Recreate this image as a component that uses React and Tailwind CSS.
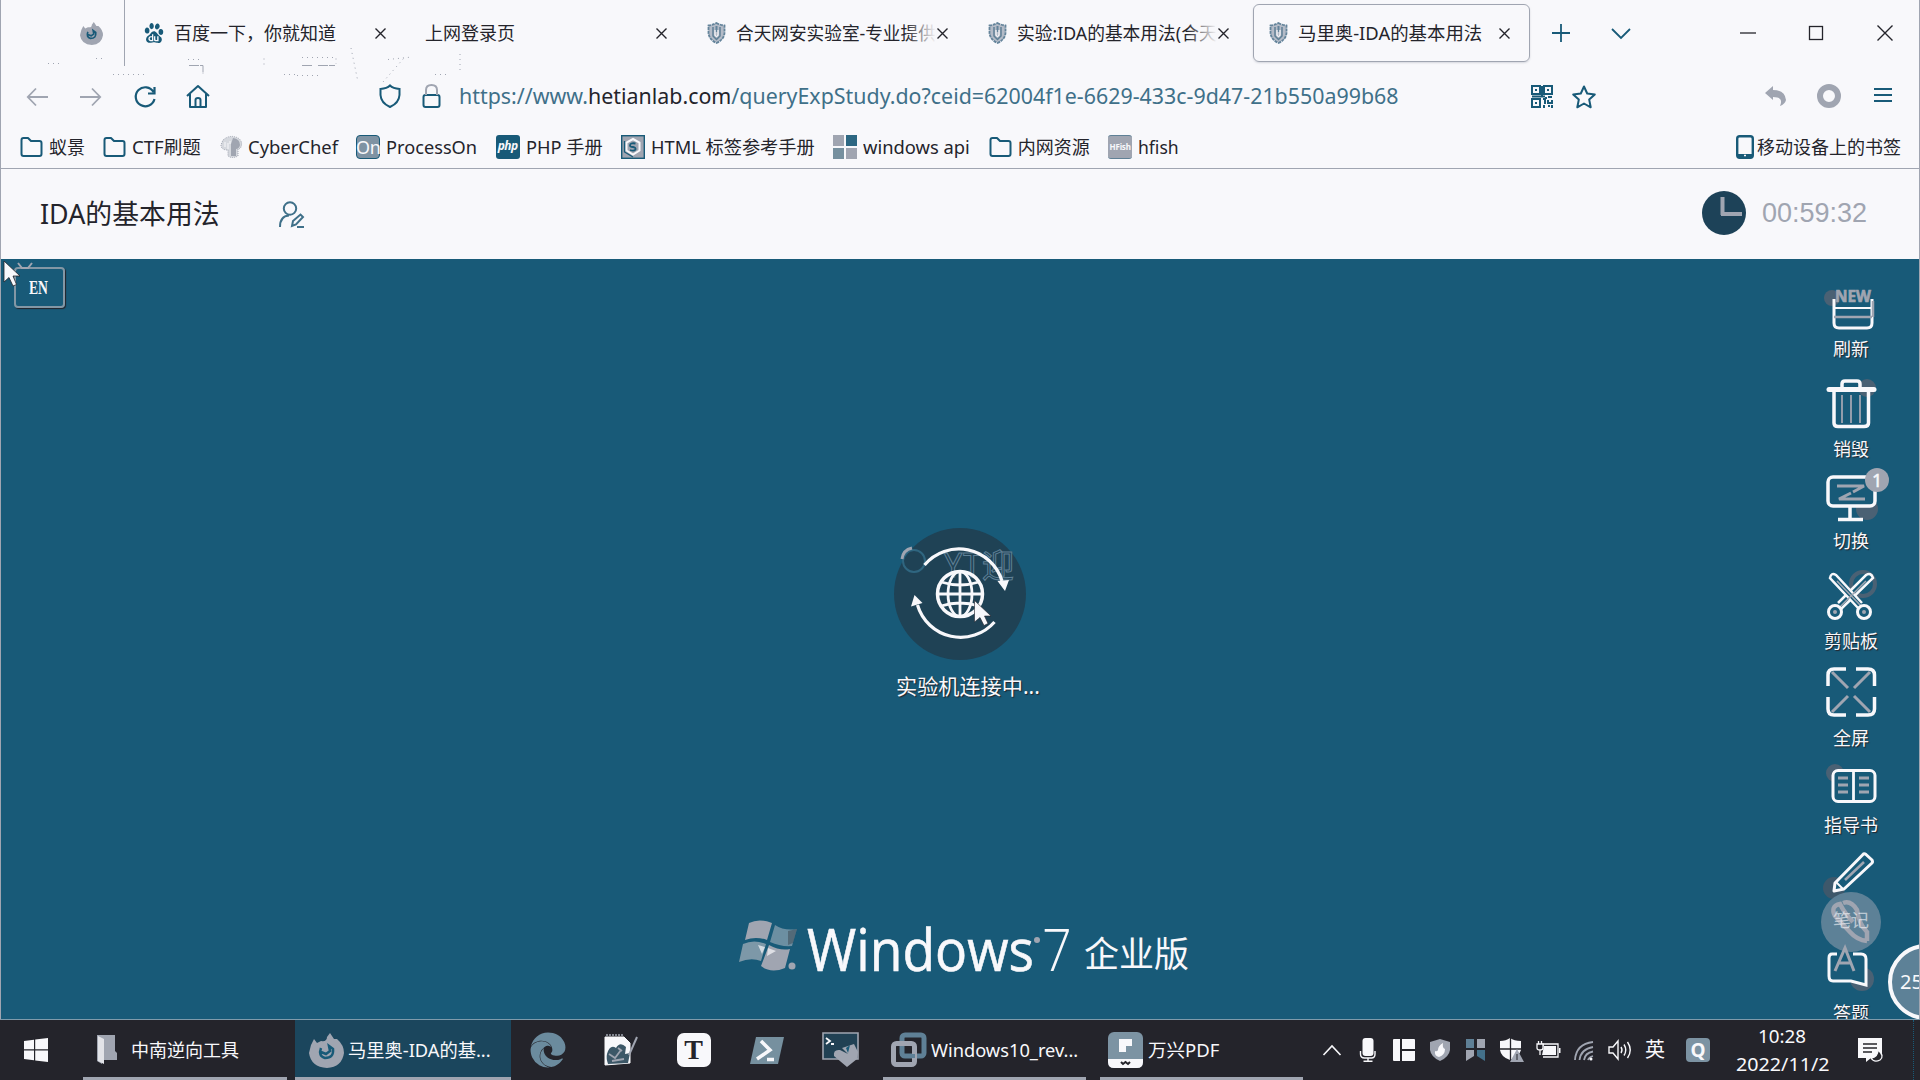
import React, { useLayoutEffect, useRef, useState } from "react";
import { FaEdge } from "react-icons/fa";
import { SiBaidu } from "react-icons/si";

const G = "#a0a5b1";
const T = "#185a78";
const W = "#f8f8fb";
const D = "#24242b";

// Squeezes or stretches one line of text to the width of its box.
function Fit({ className = "", children }) {
  const outer = useRef(null);
  const inner = useRef(null);
  const [s, setS] = useState(1);
  useLayoutEffect(() => {
    setS(outer.current.clientWidth / inner.current.offsetWidth);
  }, []);
  return (
    <span ref={outer} className={"block shrink-0 whitespace-nowrap " + className}>
      <span ref={inner} className="inline-block origin-left" style={{ transform: `scaleX(${s})` }}>
        {children}
      </span>
    </span>
  );
}

function Svg({ w, h, className = "", children, ...p }) {
  return (
    <svg width={w} height={h} viewBox={`0 0 ${w} ${h}`} fill="none" className={"block shrink-0 overflow-visible " + className} {...p}>
      {children}
    </svg>
  );
}

const Cross = ({ size = 12, color = D }) => (
  <Svg w={size} h={size} stroke={color} strokeWidth="1.4">
    <path d={`M.5 .5L${size - 0.5} ${size - 0.5}M${size - 0.5} .5L.5 ${size - 0.5}`} />
  </Svg>
);

const Firefox = ({ w, h }) => (
  <svg width={w} height={h} viewBox="0 0 35 35" preserveAspectRatio="none" fill="none" className="block shrink-0">
    <path d="M2 12L5 6L8 10L12 8Q18 9 18 4L21 0L25 6L28 6Q35 12 35 20Q33 34 18 35Q2 34 0 20Z" fill={G} />
    <path d="M12 15Q9 23 16 25Q25 25 24 16L20 13L21 18L17 21L12 19" stroke={T} strokeWidth="2.500" />
  </svg>
);

const ShieldTab = () => (
  <Svg w={19} h={22}>
    <path d="M9.5 1Q13 3 17.5 3.5V11Q17 17.500 9.500 21Q2 17.500 1.500 11V3.500Q6 3 9.500 1Z" fill="#b4bbc7" stroke="#63839a" strokeWidth="1.800" strokeDasharray="3 .8" />
    <path d="M6 5V14L9.500 17.500L13 14V5" stroke="#5f8096" strokeWidth="1.500" />
    <path d="M9.500 4V10" stroke="#63839a" strokeWidth="2" />
    <path d="M8 8V13Q9.500 16 11 13V8" stroke={W} strokeWidth="1.200" />
  </Svg>
);

function Tab({ icon, title, active, fade, fit }) {
  return (
    <div
      className={
        "flex h-[58px] shrink-0 items-center " +
        (active
          ? "w-[277px] rounded-[6px] border-[1.5px] border-[#a0a5b1] pl-[14px] shadow-[0_1px_2px_#a0a5b166]"
          : "w-[281px] pl-[15px]")
      }
    >
      {icon && <span className="mr-[10px] flex w-5 shrink-0 justify-center">{icon}</span>}
      <div className={"relative whitespace-nowrap " + (icon ? "w-[200px]" : "w-[230px]")}>
        {fit ? <Fit className={fit}>{title}</Fit> : title}
        {fade && <span className="absolute inset-y-0 right-0 w-[30px] bg-gradient-to-r from-[#f8f8fb00] to-[#f8f8fb]" />}
      </div>
      <span className="ml-[1px] shrink-0"><Cross size={11} /></span>
    </div>
  );
}

const Folder = () => (
  <Svg w={23} h={20} stroke={T} strokeWidth="2">
    <path d="M1.500 3Q1.500 1 3.500 1H8L11 4H19.500Q21.500 4 21.500 6V17Q21.500 19 19.500 19H3.500Q1.500 19 1.500 17Z" strokeLinejoin="round" />
  </Svg>
);

const Chef = () => (
  <Svg w={22} h={22}>
    <path d="M3 4Q10-2 18 2Q23 5 21 11Q20 13 18 13V20Q12 23 8 20V14Q1 14 1 9Z" fill="#d5d8de" stroke={G} strokeDasharray="1 1" />
    <path d="M13 2Q20 3 20 9Q19 13 16 13V20H11V8Z" fill={G} />
    <path d="M5 6V11M8 7V13M10 5V8" stroke={W} />
  </Svg>
);

const ProcessOn = () => (
  <span className="flex h-6 w-6 items-center justify-center rounded-[4px] border border-[#185a78] bg-[#7f93a3] text-[18px] leading-none tracking-tight text-[#f8f8fb]">On</span>
);
const Php = () => (
  <span className="flex h-6 w-6 items-center justify-center rounded-[3px] bg-[#185a78] pb-[2px] text-[12px] font-bold italic leading-none tracking-tighter text-[#f8f8fb]">php</span>
);
const HtmlIcon = () => (
  <Svg w={24} h={24}>
    <rect x=".7" y=".7" width="22.600" height="22.600" fill={G} stroke={T} strokeWidth="1.400" />
    <path d="M12 4L18.500 7.500V15.500L12 19.500L5.500 15.500V7.500Z" stroke={W} strokeWidth="2" />
    <path d="M14.500 8.500Q9 7.500 9 10.500Q9 12 12 12Q15 12.500 14.500 14.500Q13 16.500 9 15" stroke={T} strokeWidth="1.800" />
    <path d="M3.500 6V17L12 22" stroke={T} strokeWidth="1.300" />
  </Svg>
);
const WinApi = () => (
  <Svg w={24} h={24}>
    <path d="M0 0H11V11H0ZM13 13H24V24H13Z" fill={G} />
    <path d="M13 0H24V11H13Z" fill="#2d6782" />
    <path d="M0 13H11V24H0Z" fill="#76909f" />
  </Svg>
);
const Hfish = () => (
  <span className="flex h-6 w-6 items-center justify-center rounded-[3px] border-y border-[#5f8096] bg-[#a0a5b1] text-[8px] font-bold leading-none tracking-tight text-[#f8f8fb]">HFish</span>
);

const bookmarks = [
  [<Folder />, "蚁景", "w-[36px]"],
  [<Folder />, "CTF刷题", "w-[69px]"],
  [<Chef />, "CyberChef", "w-[90px]"],
  [<ProcessOn />, "ProcessOn", "w-[91px]"],
  [<Php />, "PHP 手册", "w-[77px]"],
  [<HtmlIcon />, "HTML 标签参考手册", "w-[164px]"],
  [<WinApi />, "windows api", "w-[107px]"],
  [<Folder />, "内网资源", "w-[72px]"],
  [<Hfish />, "hfish", "w-[41px]"],
];

const Cursor = ({ className }) => (
  <Svg w={17} h={26} className={className}>
    <path d="M1 1V22L6 17.500L10 26L13.500 24.500L10 16H17Z" fill={W} stroke={D} strokeWidth=".8" />
  </Svg>
);

const tools = [
  {
    label: "刷新", h: "h-[96px]",
    icon: (
      <>
        <circle cx="11" cy="21" r="8" fill="#4a6174" />
        <path d="M13 22V46Q13 51 18 51H46Q51 51 51 46V22" stroke={W} strokeWidth="3" />
        <path d="M12 31H52" stroke={W} strokeWidth="2" />
        <path d="M13 40H51M52 24V40" stroke={G} strokeWidth="2.500" />
        <text x="14" y="25" fontSize="16" fontWeight="700" fill={G} stroke={G} strokeWidth=".7" textLength="36" lengthAdjust="spacingAndGlyphs">NEW</text>
      </>
    ),
  },
  {
    label: "销毁", h: "h-[100px]",
    icon: (
      <>
        <circle cx="46" cy="11" r="9" fill="#4a6174" />
        <path d="M8 12.500H53" stroke={W} strokeWidth="5" strokeLinecap="round" />
        <path d="M21 11V7Q21 4 24 4H36Q39 4 39 7V11" stroke={W} strokeWidth="3.500" />
        <path d="M13 15V46Q13 49.500 17 49.500H43Q47.500 49.500 47.500 46V15" stroke={W} strokeWidth="3.500" />
        <path d="M21 18V46M30 18V46M39 18V46" stroke={G} strokeWidth="1.800" />
      </>
    ),
  },
  {
    label: "切换", h: "h-[92px]",
    icon: (
      <>
        <circle cx="46" cy="40" r="11" fill="#4a6174" />
        <rect x="7" y="8" width="47" height="29" rx="5" fill={T} stroke={W} strokeWidth="3.500" />
        <path d="M29 37V50M17 50.500H42" stroke={W} strokeWidth="3.500" />
        <path d="M16 17H43L32 23M44 30H18L30 24" stroke={G} strokeWidth="3" />
        <circle cx="56" cy="11" r="12" fill={G} />
        <text x="51" y="17.500" fontSize="18" fill={W} stroke={W} strokeWidth=".5">1</text>
      </>
    ),
  },
  {
    label: "剪贴板", h: "h-[100px]",
    icon: (
      <>
        <circle cx="42" cy="15" r="12" stroke="#4a6174" strokeWidth="4" />
        <path d="M20 40L52 9Q50 3 45 6L17 34" fill={T} stroke={W} strokeWidth="2.500" />
        <path d="M38 40L9 9Q10 3 15 6L41 34" fill={T} stroke={W} strokeWidth="2.500" />
        <path d="M16 12L40 37M45 12L19 38" stroke={G} strokeWidth="1.600" />
        <circle cx="14" cy="43" r="6.500" fill={T} stroke={W} strokeWidth="3" />
        <circle cx="43" cy="43" r="6.500" fill={T} stroke={W} strokeWidth="3" />
        <circle cx="14" cy="43" r="2" fill={G} />
        <circle cx="43" cy="43" r="2" fill={G} />
      </>
    ),
  },
  {
    label: "全屏", h: "h-[97px]",
    icon: (
      <>
        <path d="M7 20V9Q7 3 13 3H25M35 3H47Q53.500 3 53.500 9V20M53.500 31V43Q53.500 49 47 49H35M25 49H13Q7 49 7 43V31" stroke={W} strokeWidth="3.500" />
        <path d="M11 6L27 22M49 6L33 22M11 46L27 30M49 46L33 30" stroke={G} strokeWidth="3" />
      </>
    ),
  },
  {
    label: "指导书", h: "h-[87px]",
    icon: (
      <>
        <circle cx="14" cy="20" r="9" fill="#4a6174" />
        <rect x="12" y="17.500" width="42" height="31" rx="5" fill={T} stroke={W} strokeWidth="3" />
        <path d="M32.500 18V48" stroke={W} strokeWidth="2.800" />
        <path d="M17 25H27M17 32H27M17 39H27M38 25H48M38 32H48M38 39H48" stroke={G} strokeWidth="3" />
      </>
    ),
  },
  {
    label: "笔记", h: "h-[95px]", ghost: true,
    icon: (
      <>
        <circle cx="13" cy="40" r="11" fill="#3e586b" />
        <circle cx="30" cy="74" r="30" fill="#5d8197" />
        <path d="M46 93Q36 92 29 84L14 68Q9 58 19 56Q24 66 32 74M22 55Q30 52 36 62Q38 76 46 84V93" stroke={G} strokeWidth="4.500" />
        <path d="M14 35L42 6.500Q43 5 45 6.500L51 12Q52 14 51 15L23 41L13 43Z" fill={T} stroke={W} strokeWidth="3" strokeLinejoin="round" />
        <path d="M15 34L22 41" stroke={W} strokeWidth="2" />
        <path d="M24 32L43 14" stroke={G} strokeWidth="2.500" />
      </>
    ),
  },
  {
    label: "答题", h: "h-[93px]",
    icon: (
      <>
        <circle cx="41" cy="38" r="12" fill="#4a6174" />
        <path d="M16 13H11Q8 13 8 17V35Q8 40 12 40H30L45 44V18Q45 13 40 13H32" fill={T} stroke={W} strokeWidth="3" />
        <path d="M14 30L24 7L33 30M17 22H30" stroke={G} strokeWidth="3" />
      </>
    ),
  },
];

const Flag = () => (
  <Svg w={60} h={56} className="mt-[3px]">
    <path d="M10 4Q20-1 33 4L28 21Q17 17 6 21Z" fill={G} />
    <path d="M36 6Q45 12 58 10L53 27Q42 28 31 23Z" fill="#6c8fa2" />
    <path d="M4 25Q15 20 27 25L22 42Q12 38 0 43Z" fill="#7d98a8" />
    <path d="M30 26Q41 32 51 30L46 49Q32 55 22 47Z" fill={G} />
    <path d="M19 26L26 28L23 35ZM29 29L37 32L28 37Z" fill={W} opacity=".7" />
    <path d="M49 12L58 10L54 24L49 26Z" fill={D} opacity=".35" />
    <circle cx="53" cy="47" r="3.500" fill={G} />
  </Svg>
);

function Cell({ children, className = "w-9" }) {
  return <div className={"flex h-full shrink-0 items-center justify-center " + className}>{children}</div>;
}

function TrayIcons() {
  return (
    <>
      <Cell><Svg w={18} h={12} stroke={W} strokeWidth="1.600"><path d="M.5 11L9 2L17.500 11" /></Svg></Cell>
      <Cell>
        <Svg w={16} h={24}><rect x="2.500" y="0" width="11" height="18" rx="3" fill={W} /><path d="M.5 13V16Q.5 20 4.500 20H11.500Q15 20 15 16V13M8 20V23M3.500 23.300H12.500" stroke={W} strokeWidth="1.400" /></Svg>
      </Cell>
      <Cell><Svg w={22} h={22}><path d="M0 1Q0 0 1 0H7V22H1Q0 22 0 21ZM9 0H21Q22 0 22 1V10H9ZM9 12H22V21Q22 22 21 22H9Z" fill={W} /></Svg></Cell>
      <Cell><Svg w={20} h={22}><path d="M10 0L20 3V11Q19 18 10 22Q1 18 0 11V3Z" fill={G} /><path d="M13 4Q12 9 15 10Q15 16 9 18Q4 17 5 12Q7 13 8 11Q8 7 13 4Z" fill={W} /></Svg></Cell>
      <Cell><Svg w={20} h={24}><path d="M0 1H8V10H0Z" fill="#5f8096" /><path d="M11 1H19V10H11ZM0 12H8V18L0 23Z" fill={G} /><path d="M11 12H19V23L11 18Z" fill="#43708a" /></Svg></Cell>
      <Cell><Svg w={24} h={24}><path d="M10 0Q14 3 21 3V12Q19 19 10 22Q1 19 0 12V3Q6 3 10 0Z" fill={W} /><path d="M10.500 0V22M0 11H21" stroke={D} strokeWidth="1.300" /><path d="M17 11L24 24H10Z" fill={G} /><path d="M17 16V22" stroke={D} /></Svg></Cell>
      <Cell><Svg w={25} h={20}><path d="M7 6.500V4H22V17H7" stroke={W} strokeWidth="1.300" /><path d="M8 6H20V15H6Z" fill={W} /><path d="M23 8H24.500V13H23Z" fill={W} /><path d="M1 4H7V8Q7 10 4 10Q1 10 1 8ZM2.500 1V4M5.500 1V4M4 10V15" stroke={W} strokeWidth="1.300" fill={D} /></Svg></Cell>
      <Cell><Svg w={20} h={22} stroke={G} strokeWidth="1.800"><path d="M1 21Q2 5 19 3M5.500 21Q7 10 19 8M10 21Q11 14 19 12.500M14 21Q15 18 19 17" /><circle cx="17" cy="20" r="1.500" fill={W} stroke="none" /></Svg></Cell>
      <Cell><Svg w={24} h={22} stroke={W} strokeWidth="1.400"><path d="M1 8H5L10 2V20L5 14H1ZM13 8Q15 11 13 14M16 5.500Q19.500 11 16 16.500M19.500 3Q25 11 19.500 19" /></Svg></Cell>
      <Cell className="w-[34px]"><span className="text-[20px] text-[#f8f8fb]">英</span></Cell>
      <Cell className="ml-[2px] w-12"><span className="flex h-6 w-6 items-center justify-center rounded-[4px] bg-[#7c93a3] pb-[1px] text-[19px] font-bold text-[#f8f8fb]">Q</span></Cell>
    </>
  );
}

function Taskbar() {
  return (
    <div className="flex h-[61px] w-full border-t border-[#7f9bab] bg-[#24242b] text-[18px] text-[#f8f8fb]">
      <Cell className="w-[72px]">
        <Svg w={24} h={24}><path d="M0 3L10 1.700V11.300H0ZM11.200 1.500L24 0V11.300H11.200ZM0 12.500H10V22.300L0 21ZM11.200 12.500H24V24L11.200 22.500Z" fill={W} /></Svg>
      </Cell>
      <div className="ml-[11px] flex w-[204px] items-center border-b-[3px] border-[#a0a5b1] pl-[14px] pt-[3px]">
        <Svg w={20} h={30} className="mr-[14px]"><path d="M0 0H18V16L20 18V25H5V29L0 26Z" fill={G} /><path d="M1 1L7 4V29L1 26Z" fill="#e2e3e8" /></Svg>
        中南逆向工具
      </div>
      <div className="ml-2 flex w-[216px] items-center border-b-[3px] border-[#a0a5b1] bg-[#1b465d] pl-[14px] pt-[3px]">
        <span className="mr-1 flex"><Firefox w={35} h={35} /></span>
        <Fit className="w-[143px]">马里奥-IDA的基...</Fit>
      </div>
      <Cell className="w-[73px]"><FaEdge size={36} color="#6b8b9e" /></Cell>
      <Cell className="w-[73px]">
        <Svg w={34} h={32}><path d="M1 3H20L26 9V29L1 31Z" fill={W} stroke={W} /><path d="M3 2V0M6 2V0M9 2V0M12 2V0M15 2V0M18 2V0" stroke={G} strokeWidth="1.500" /><path d="M3 20Q6 10 12 14Q16 7 22 13L21 20L26 19L24 29L4 30Q2 24 3 20Z" fill="#3c5767" /><path d="M5 20L11 24L17 16M8 27L20 25M14 14L18 17" stroke={G} strokeWidth="1.800" /><path d="M25 21L33 3" stroke={G} strokeWidth="2" /></Svg>
      </Cell>
      <Cell className="w-[73px]"><span className="flex h-[34px] w-[34px] items-center justify-center rounded-[7px] bg-[#f8f8fb] pb-[1px] font-[Liberation_Serif,serif] text-[28px] font-bold leading-none text-[#24242b]">T</span></Cell>
      <Cell className="w-[73px]">
        <Svg w={34} h={27}><path d="M6 0H34L28 27H0Z" fill="#76909f" /><path d="M11 4L20 13L7 22M17 22.500H24" stroke={W} strokeWidth="3.500" /></Svg>
      </Cell>
      <Cell className="w-[73px]">
        <Svg w={36} h={36}><path d="M1 1H36V27H1Z" fill="#214154" stroke={G} strokeWidth="1.600" /><path d="M4 6L8 9L4 12M9 12H12" stroke={W} strokeWidth="1.800" /><path d="M25 35L12 24Q11 17 18 18L26 22L20 16L32 12L36 20L35 27Z" fill={G} /><path d="M24 16L28 13L26 21Z" fill={T} /></Svg>
      </Cell>
      <div className="ml-[7px] flex w-[203px] items-center border-b-[3px] border-[#a0a5b1] pl-2 pt-[3px]">
        <Svg w={36} h={36} className="mr-1"><rect x="11" y="3" width="22" height="21" rx="3" stroke="#5f8096" strokeWidth="5" /><rect x="2.500" y="11.500" width="21" height="21" rx="3" stroke={G} strokeWidth="5" /><path d="M11 14V22Q11 24 14 24H24" stroke="#5f8096" strokeWidth="4" /></Svg>
        <Fit className="w-[147px]">Windows10_rev...</Fit>
      </div>
      <div className="ml-[14px] flex w-[203px] items-center border-b-[3px] border-[#a0a5b1] pl-2 pt-[3px]">
        <Svg w={36} h={36} className="mr-1"><rect width="35" height="36" rx="6" fill="#7c93a3" /><path d="M0 27H35V30Q35 36 29 36H6Q0 36 0 30Z" fill={W} /><path d="M11 7H24V14H18V20H11Z" fill={W} /><path d="M13 30L15 32L17.500 30L20 32L22 30" stroke={D} strokeWidth="2" /></Svg>
        <Fit className="w-[71px]">万兴PDF</Fit>
      </div>
      <div className="ml-[11px] flex">
        <TrayIcons />
      </div>
      <div className="ml-[13px] flex w-[94px] flex-col items-center pt-[2px] leading-7">
        <Fit className="w-[48px]">10:28</Fit>
        <Fit className="w-[93px]">2022/11/2</Fit>
      </div>
      <Cell className="ml-[29px] w-6">
        <Svg w={25} h={24}><path d="M0 0H24V20H13L8 24V20H0Z" fill={W} /><path d="M5 6H19M5 10H19M5 14H14" stroke={D} strokeWidth="1.300" /><path d="M20 12Q20 19 13 20Q16 25 22 22Q27 18 20 12Z" fill={D} stroke={W} strokeWidth="1.300" /></Svg>
      </Cell>
      <div className="ml-auto mr-[6px] border-l border-dotted border-[#185a78]" />
    </div>
  );
}

export default function App() {
  return (
    <div className='flex h-[1080px] w-[1920px] flex-col overflow-hidden bg-[#f8f8fb] font-["Noto_Sans","Noto_Sans_CJK_SC",sans-serif] text-[18px] leading-7 text-[#24242b]'>
      <div className="flex min-h-0 flex-1 flex-col border-x border-[#a0a5b1]">
        {/* Tab strip */}
        <div className="relative flex h-[66px] items-center pr-[26px]">
          <div className="flex h-[66px] w-[124px] shrink-0 items-center justify-end border-r border-[#a0a5b1] pr-[21px]">
            <Firefox w={23} h={23} />
          </div>
          <div className="ml-[4px] flex">
            <Tab icon={<SiBaidu size={20} color={T} />} title="百度一下，你就知道" />
            <Tab title="上网登录页" />
            <Tab icon={<ShieldTab />} title="合天网安实验室-专业提供" fade fit="w-[200px]" />
            <Tab icon={<ShieldTab />} title="实验:IDA的基本用法(合天" fade fit="w-[200px]" />
            <Tab icon={<ShieldTab />} title="马里奥-IDA的基本用法" active fit="w-[184px]" />
          </div>
          <Svg w={18} h={18} className="ml-[22px]" stroke={T} strokeWidth="1.800"><path d="M9 0V18M0 9H18" /></Svg>
          <Svg w={18} h={11} className="ml-[42px]" stroke={T} strokeWidth="1.800"><path d="M0 1L9 10L18 1" /></Svg>
          <Svg w={16} h={2} className="ml-auto" stroke={D} strokeWidth="1.300"><path d="M0 1H16" /></Svg>
          <Svg w={14} h={14} className="ml-[53px]" stroke={D} strokeWidth="1.300"><rect x=".5" y=".5" width="13" height="13" /></Svg>
          <span className="ml-[54px]"><Cross size={16} /></span>
          {/* Faint dotted marks under the first tabs */}
          <Svg w={430} h={46} className="pointer-events-none absolute left-[47px] top-[48px]" stroke={G}>
            <path d="M0 15.500H14M48 10.500H56M65 26.500H98M140 11.500H155M216 16.500V10M254 9.500H288V16M236 26.500H248M249 27.500H274M303 0L310 34M335 34L356 10M387 26.500H402M340 11.500L364 9M412 6V22" strokeDasharray="1 4" />
            <path d="M141 17.500H155V26M254 17.500H264M270 17.500H287" strokeDasharray="10 1" />
          </Svg>
        </div>

        {/* Navigation bar */}
        <div className="flex h-[61px] items-center pl-[26px] pr-[27px]">
          <Svg w={21} h={18} stroke={G} strokeWidth="1.800"><path d="M21 9H1M9 .5L.8 9L9 17.500" /></Svg>
          <Svg w={21} h={18} className="ml-[32px]" stroke={G} strokeWidth="1.800"><path d="M0 9H20M12 .5L20.200 9L12 17.500" /></Svg>
          <Svg w={22} h={22} className="ml-[33px]" stroke={T} strokeWidth="2.200"><path d="M19.500 6A9.500 9.500 0 1 0 20.500 13M20.500 1V7.500H14" /></Svg>
          <Svg w={22} h={23} className="ml-[31px]" stroke={T} strokeWidth="2" strokeLinejoin="round"><path d="M0 11L11 1L22 11M3 9V22H19V9M8.500 22V15Q8.500 13 11 13Q13.500 13 13.500 15V22" /></Svg>
          <Svg w={22} h={24} className="ml-[170px] -mt-[2px]" stroke={T} strokeWidth="2"><path d="M11 1.500Q14 4.500 20.500 5V11Q20 19 11 23Q2 19 1.500 11V5Q8 4.500 11 1.500Z" /></Svg>
          <Svg w={19} h={24} className="ml-[21px] -mt-[2px]" stroke={T} strokeWidth="2"><rect x="1.500" y="11" width="16" height="12" rx="2" /><path d="M4 11V6Q4 1 9.500 1Q15 1 15 6V11" stroke={G} /></Svg>
          <Fit className="-mt-[3px] ml-[18px] w-[940px] text-[22px] text-[#3f7089]">
            https://www.<span className="text-[#24242b]">hetianlab.com</span>/queryExpStudy.do?ceid=62004f1e-6629-433c-9d47-21b550a99b68
          </Fit>
          <Svg w={22} h={23} className="ml-[132px]" stroke={T} strokeWidth="2"><path d="M1 1H9V9H1ZM13 1H21V9H13ZM1 14H9V22H1ZM4 5H6M16 5H18M4 18H6M11 1V11M1 11.500H14M12 14H14V17M17 12H21M17 15V18H21V15M13 20V23M17 21H19M21 20V23M13 18H15M15 12V14" /></Svg>
          <Svg w={24} h={24} className="ml-[19px]" stroke={T} strokeWidth="2" strokeLinejoin="round"><path d="M12 1.500L15.200 8.500L22.800 9.400L17.200 14.600L18.700 22.300L12 18.500L5.300 22.300L6.800 14.600L1.200 9.400L8.800 8.500Z" /></Svg>
          <Svg w={21} h={20} className="-mt-[2px] ml-auto"><path d="M0 7L8 0V4Q20 4 21 14Q20 18 15 20Q19 11 8 11V14Z" fill={G} /></Svg>
          <Svg w={24} h={24} className="-mt-[2px] ml-[31px]"><circle cx="12" cy="12" r="9" stroke={G} strokeWidth="6" /></Svg>
          <Svg w={18} h={14} className="-mt-[3px] ml-[33px]" stroke={T} strokeWidth="2"><path d="M0 1H18M0 7H18M0 13H18" /></Svg>
        </div>

        {/* Bookmarks bar */}
        <div className="flex h-[42px] items-center border-b border-[#a0a5b1] pb-[2px] pl-[19px] pr-[18px]">
          <div className="flex gap-[18.4px]">
            {bookmarks.map(([icon, text, w]) => (
              <div key={text} className="flex items-center gap-[6px]">
                {icon}
                <Fit className={w}>{text}</Fit>
              </div>
            ))}
          </div>
          <div className="ml-auto flex items-center gap-[3px]">
            <Svg w={18} h={24} stroke={T}><rect x="1.200" y="1.200" width="15.600" height="21.600" rx="2.500" strokeWidth="2.400" /><path d="M1 20.500H17" strokeWidth="3" /><path d="M8 20.500H10" stroke={W} strokeWidth="1.500" /></Svg>
            移动设备上的书签
          </div>
        </div>

        {/* Experiment header */}
        <div className="flex h-[90px] shrink-0 items-center pl-[39px] pr-[52px]">
          <Fit className="w-[180px] text-[27px] leading-9">IDA的基本用法</Fit>
          <Svg w={25} h={27} className="ml-[59px]" stroke="#3f7089" strokeWidth="2"><circle cx="11" cy="7.500" r="6.200" /><path d="M1 26Q1 15 10 14.500M13 25L14 20L21.500 13.500L24 16L17 23.500ZM18 26H25" /></Svg>
          <Svg w={44} h={44} className="-mt-[3px] ml-auto"><circle cx="22" cy="22" r="22" fill="#1d4258" /><path d="M20.500 6V24M19 23H40" stroke={G} strokeWidth="4" /></Svg>
          <Fit className="-mt-[2px] ml-[16px] w-[105px] font-[Liberation_Sans,sans-serif] text-[27px] text-[#a0a5b1]">00:59:32</Fit>
        </div>

        {/* Remote desktop */}
        <div className="relative flex min-h-0 flex-1 flex-col items-center overflow-hidden bg-[#185a78] text-[#f8f8fb]">
          <div className="absolute left-[13px] top-[8px] flex h-[41px] w-[51px] items-center justify-center rounded-[4px] border-2 border-[#8397a5] font-[Liberation_Serif,serif] text-[18px] font-bold shadow-[1px_1px_1px_#24242b]">
            <Fit className="-ml-[3px] w-[19px]">EN</Fit>
          </div>
          <Svg w={14} h={6} className="absolute left-[17px] top-[4px]"><path d="M0 0L4 5H10L14 0" stroke={G} strokeWidth="2" /></Svg>
          <Cursor className="absolute left-[2px] top-[1px]" />

          <div className="mt-[269px] flex h-[132px] w-[132px] shrink-0">
            <Svg w={132} h={132}>
              <circle cx="66" cy="66" r="66" fill="#1f4255" />
              <circle cx="20" cy="33" r="11" stroke="#2f6680" strokeWidth="2" />
              <path d="M8 31Q9 22 18 20" stroke={G} strokeWidth="3" />
              <text x="50" y="49" fontSize="32" stroke="#5f8096" strokeWidth="1" textLength="70">YT迎</text>
              <path d="M30.500 37A45 45 0 0 1 108 53M100.500 94A45 45 0 0 1 23.500 77" stroke={W} strokeWidth="3.200" />
              <path d="M103.500 53L115 52L111 63ZM17 78.500L28.500 75L20.500 67Z" fill={W} />
              <g stroke={W} strokeWidth="2.800">
                <circle cx="66" cy="66" r="22.500" strokeWidth="3.500" />
                <ellipse cx="66" cy="66" rx="12" ry="22.500" />
                <path d="M66 43V89M43 66H89M47 54Q66 60 85 54M47 78Q66 72 85 78" />
              </g>
              <path d="M80.500 72.500V94L86 89.500L90 97.500L94 95.500L90.500 88H97Z" fill={W} stroke={D} strokeWidth=".6" />
            </Svg>
          </div>
          <div className="ml-[16px] mt-[12px] shrink-0 [text-shadow:1px_1px_1px_#24242b]">
            <Fit className="w-[144px] text-[21px]">实验机连接中...</Fit>
          </div>

          <div className="mr-[4px] mt-[216px] flex shrink-0 items-start pl-[12px]">
            <Flag />
            <Fit className='ml-[8px] w-[227px] font-["Open_Sans",sans-serif] text-[59px] leading-[64px] [-webkit-text-stroke:.6px_#f8f8fb]'>Windows</Fit>
            <span className="mt-[21px] h-[6px] w-[6px] shrink-0 rounded-full bg-[#a0a5b1]" />
            <Fit className='ml-[2px] w-[30px] font-["Open_Sans",sans-serif] text-[59px] font-light leading-[64px]'>7</Fit>
            <span className="ml-[12px] mt-[14px] whitespace-nowrap text-[35px] leading-[48px]">企业版</span>
          </div>

          {/* Tool column */}
          <div className="absolute right-[28px] top-[6px] flex w-[80px] flex-col">
            {tools.map((t) => (
              <div key={t.label} className={"flex shrink-0 flex-col items-center justify-end " + t.h}>
                <Svg w={60} h={60}>{t.icon}</Svg>
                <span className={"z-10 h-6 text-[18px] leading-6 " + (t.ghost ? "opacity-60" : "[text-shadow:1px_1px_1px_#24242b]")}>{t.label}</span>
              </div>
            ))}
          </div>
          <div className="absolute -right-[45px] top-[685px] flex h-[76px] w-[76px] items-center rounded-full border-4 border-[#f8f8fb] bg-[#5d8197] pl-[8px] text-[20px]">25</div>
        </div>
      </div>
      <Taskbar />
    </div>
  );
}
